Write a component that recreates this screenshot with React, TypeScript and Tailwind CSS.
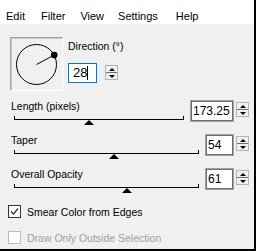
import React from 'react';

const Spin = () => (
  <div className="flex h-[15px] w-[13px] flex-col border border-[#b4b4b4] bg-[#f0f0f0]">
    <div className="flex h-[7px] items-center justify-center border-b border-[#6d6d6d]">
      <div className="h-0 w-0 border-x-[3px] border-b-[3px] border-x-transparent border-b-black" />
    </div>
    <div className="flex flex-1 items-center justify-center">
      <div className="h-0 w-0 border-x-[3px] border-t-[3px] border-x-transparent border-t-black" />
    </div>
  </div>
);

const ValueBox = ({ value, wide }: { value: string; wide?: boolean }) => (
  <div className={`${wide ? 'w-[44px]' : 'w-[29px]'} h-[22px] border border-[#a0a0a0]`}>
    <div className="flex h-full items-center border border-[#6d6d6d] bg-white pl-px text-[12px]">{value}</div>
  </div>
);

const SliderRow = ({ label, value, pos, wide }: { label: string; value: string; pos: number; wide?: boolean }) => (
  <div className="flex h-[34px] items-start">
    <div className="flex-1 pl-px">
      <div className="h-[12px] leading-[12px]">{label}</div>
      <div className="relative ml-[3px] mr-[6px] mt-[7px] h-[6px] border-t border-black">
        <div className="absolute left-0 top-[-4px] h-[3px] w-px bg-black" />
        <div className="absolute right-0 top-[-4px] h-[3px] w-px bg-black" />
        <div
          className="absolute top-0 h-0 w-0 border-x-[5px] border-b-[5px] border-x-transparent border-b-black"
          style={{ left: `calc(${pos * 100}% - 5px)` }}
        />
      </div>
    </div>
    <ValueBox value={value} wide={wide} />
    <div className="ml-[2px] mt-[2px]">
      <Spin />
    </div>
  </div>
);

export default function App() {
  return (
    <div className="h-[251px] w-[256px] overflow-hidden border-b-2 border-r-2 border-black bg-[#f0f0f0] font-['Liberation_Sans',Arial,sans-serif] text-[10.5px] text-black">
      {/* menu */}
      <div className="flex h-[24px] bg-white pt-[10px] text-[11px] leading-[12px]">
        <span className="ml-[6px]">Edit</span>
        <span className="ml-[16px]">Filter</span>
        <span className="ml-[15px]">View</span>
        <span className="ml-[14px]">Settings</span>
        <span className="ml-[18px]">Help</span>
      </div>

      <div className="pl-[10px] pr-[5px] pt-[13px]">
        {/* direction */}
        <div className="flex">
          <div className="h-[54px] w-[53px] border border-b-white border-l-[#a0a0a0] border-r-white border-t-[#a0a0a0] shadow-[inset_1px_1px_0_#c8c8c8]">
            <svg width="51" height="52" viewBox="1 1 51 52">
              <circle cx="26.5" cy="27.5" r="20" fill="none" stroke="#000" strokeWidth="1" />
              <line x1="26.5" y1="27.5" x2="44.2" y2="18.1" stroke="#000" strokeWidth="1" />
              <circle cx="44.2" cy="18.1" r="3.3" fill="#000" />
            </svg>
          </div>
          <div className="ml-[5px]">
            <div className="mt-[3px] h-[12px] leading-[12px]">Direction (°)</div>
            <div className="mt-[11px] flex items-start">
              <div className="flex h-[20px] w-[29px] items-center border border-[#0078d7] bg-white pl-[4px] text-[13px]">
                <span>28</span>
                <span className="h-[14px] w-px bg-black" />
              </div>
              <div className="ml-[8px] mt-[2px]">
                <Spin />
              </div>
            </div>
          </div>
        </div>

        {/* sliders */}
        <div className="mt-[9px]">
          <SliderRow label="Length (pixels)" value="173.25" pos={0.44} wide />
          <SliderRow label="Taper" value="54" pos={0.54} />
          <SliderRow label="Overall Opacity" value="61" pos={0.61} />
        </div>

        {/* checkboxes */}
        <div className="ml-[-2px] mt-[3px] flex h-[13px] items-center">
          <div className="flex h-[13px] w-[13px] items-center justify-center border border-[#333] bg-white">
            <svg width="11" height="11" viewBox="0 0 11 11">
              <polyline points="2,5.5 4.5,8 9,2.5" fill="none" stroke="#333" strokeWidth="1.2" />
            </svg>
          </div>
          <span className="ml-[6px] leading-[12px]">Smear Color from Edges</span>
        </div>
        <div className="ml-[-2px] mt-[13px] flex h-[13px] items-center">
          <div className="h-[13px] w-[13px] border border-[#bcbcbc] bg-white" />
          <span className="ml-[6px] leading-[12px] text-[#a0a0a0]">Draw Only Outside Selection</span>
        </div>
      </div>
    </div>
  );
}
